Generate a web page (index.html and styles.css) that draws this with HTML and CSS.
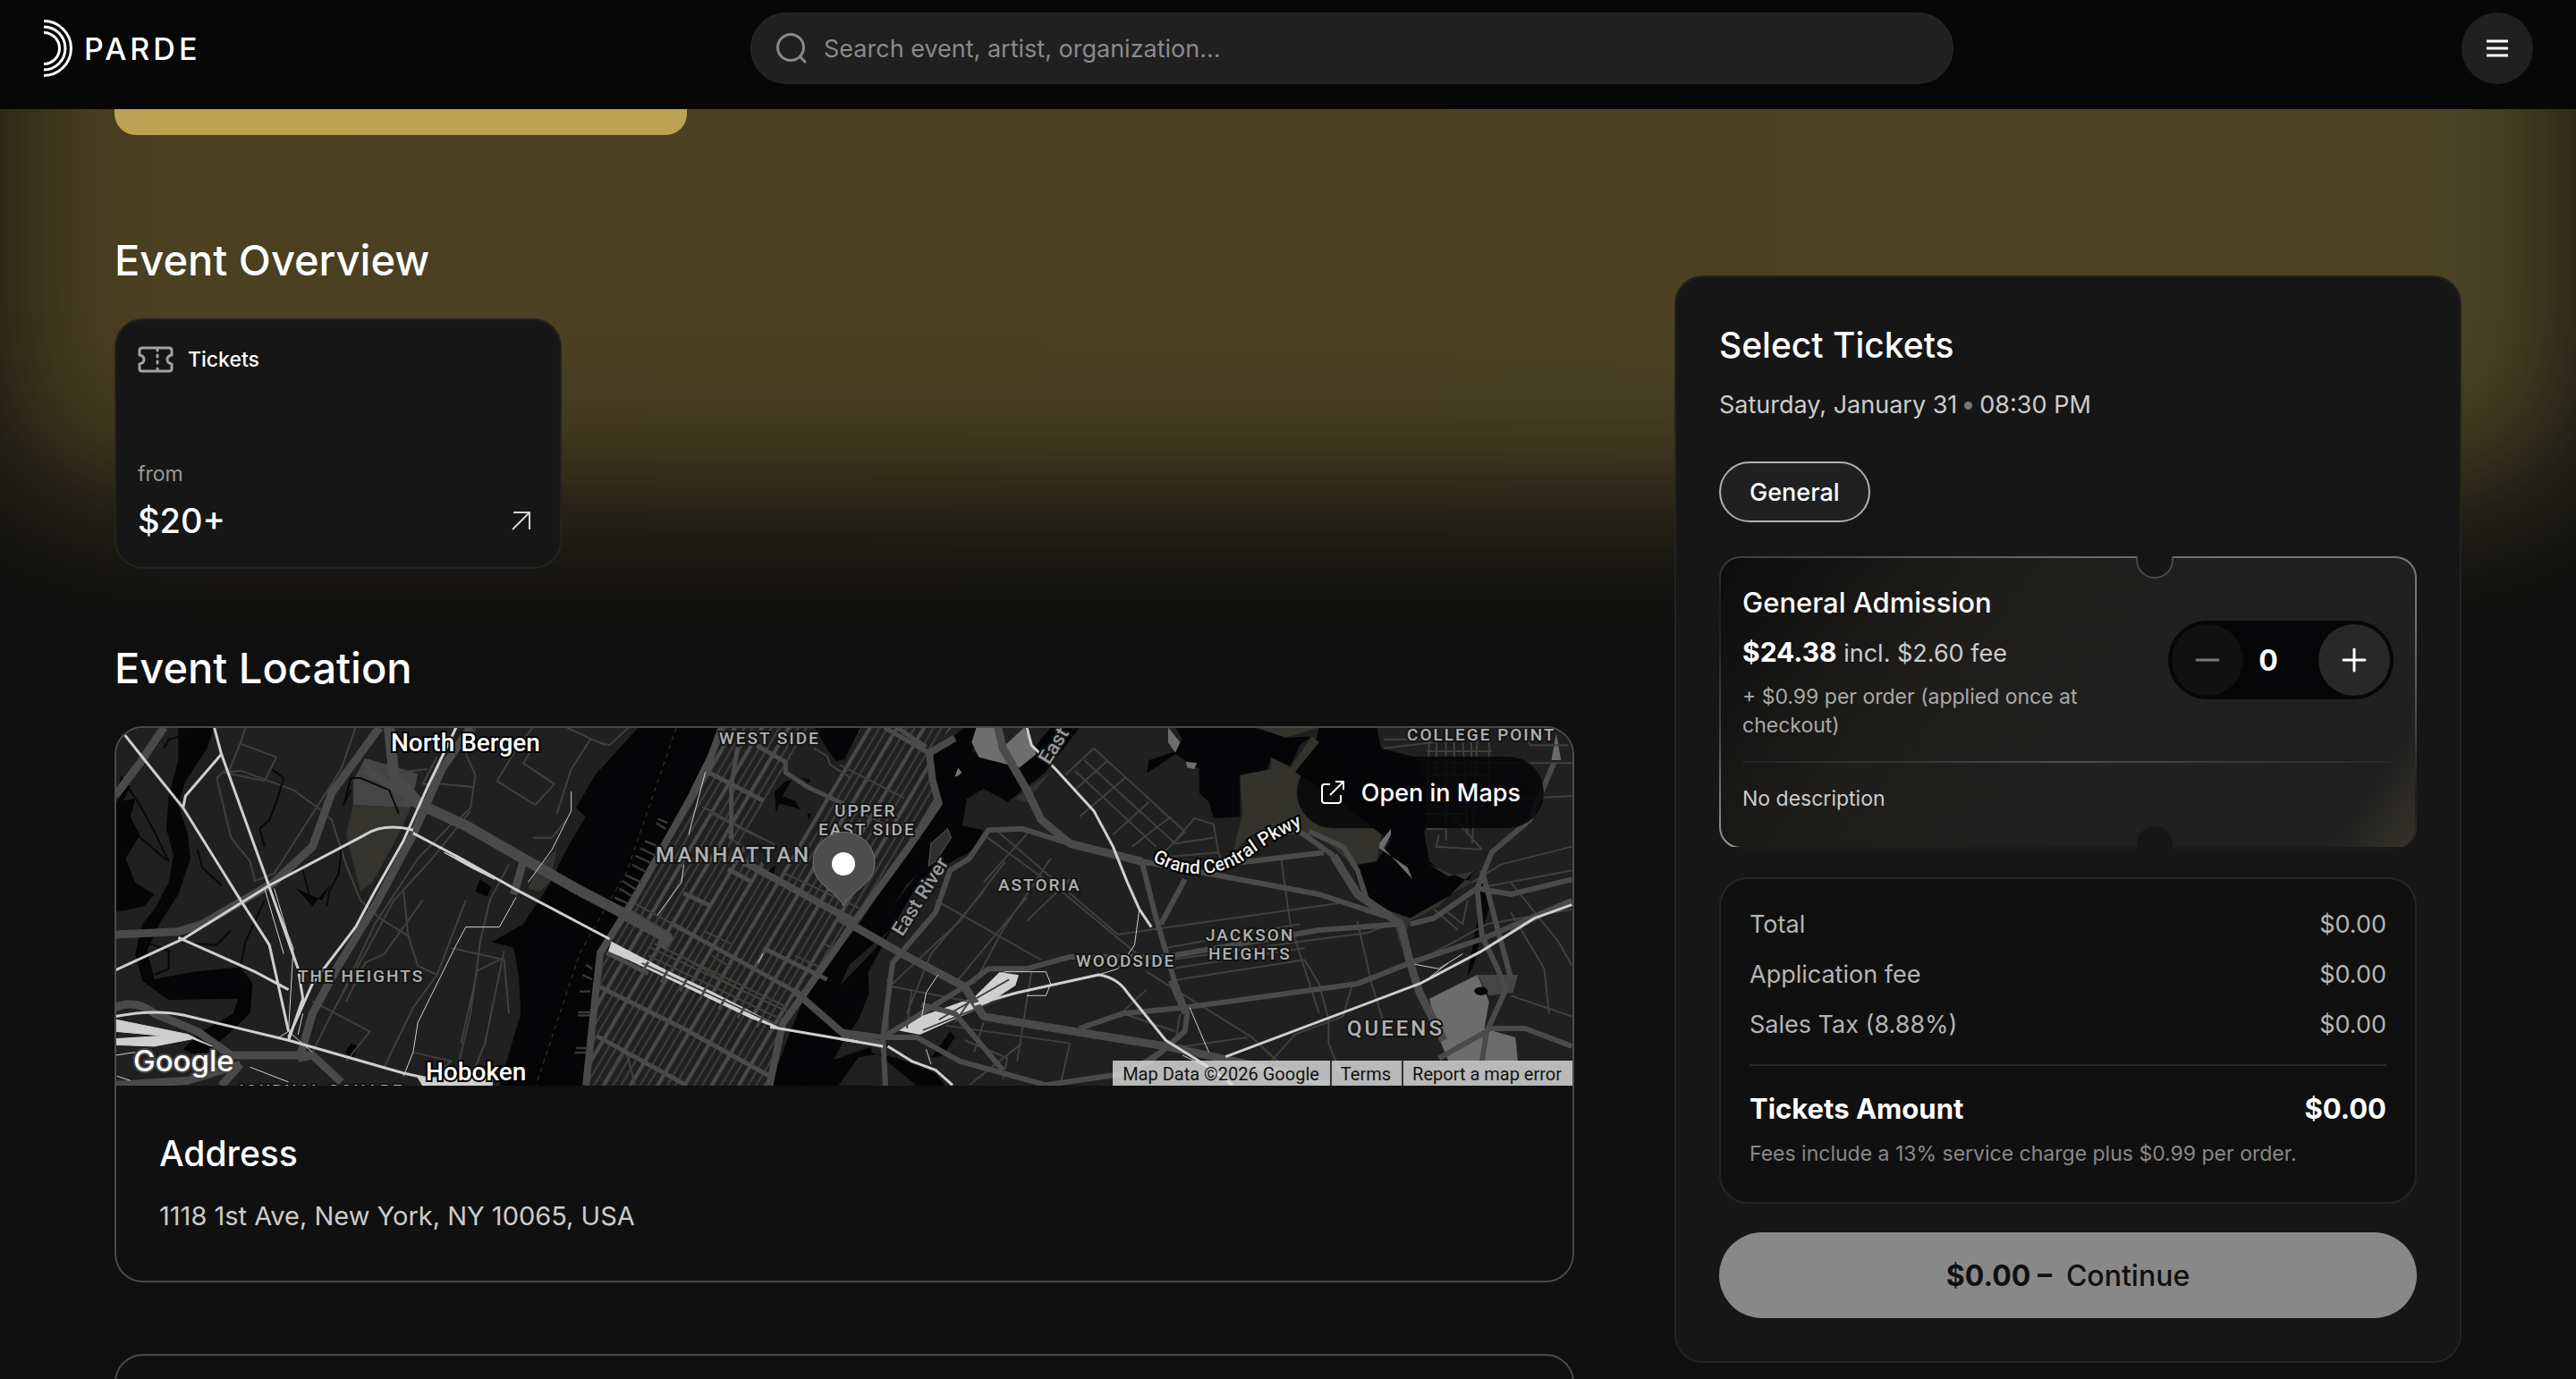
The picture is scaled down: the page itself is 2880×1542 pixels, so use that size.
FILE: index.html
```html
<!DOCTYPE html>
<html lang="en">
<head>
<meta charset="utf-8">
<title>PARDE – Event</title>
<link rel="stylesheet" href="styles.css">
</head>
<body>
<div class="page">
  <div class="glow"></div>
  <header class="header">
    <a class="logo" href="#">
      <svg class="logo-mark" width="34" height="66" viewBox="0 0 34 66" fill="none" stroke="#fff" stroke-width="3"><path d="M1 2.500A30.500 30.500 0 0 1 1 63.500"/><path d="M1 9A24 24 0 0 1 1 57"/><path d="M1 15.500A17.500 17.500 0 0 1 1 50.500"/></svg>
      <span>PARDE</span>
    </a>
    <label class="search">
      <svg width="36" height="36" viewBox="0 0 36 36" fill="none" stroke="#8a8a8a" stroke-width="3" stroke-linecap="round"><circle cx="17" cy="17" r="14.500"/><path d="M28 28l5 5"/></svg>
      <input type="text" placeholder="Search event, artist, organization..." aria-label="Search">
    </label>
    <button class="menu" aria-label="Menu"><svg width="24" height="20" viewBox="0 0 24 20" stroke="#fff" stroke-width="3"><path d="M0 2h24M0 10h24M0 18h24"/></svg></button>
  </header>
  <main class="main">
    <div class="left">
      <button class="cta" aria-label="Get tickets"></button>
      <section class="overview">
        <h2>Event Overview</h2>
        <a class="tickets-card" href="#">
          <span class="tickets-top">
            <svg width="40" height="30" viewBox="0 0 40 30" fill="none" stroke="#a2a2a2" stroke-width="3" stroke-linejoin="round" stroke-linecap="round"><path d="M5 2h30q3 0 3 3v5q-5 1-5 5t5 5v5q0 3-3 3H5q-3 0-3-3v-5q5-1 5-5t-5-5V5q0-3 3-3z"/><path d="M22 3v2M22 10v2M22 17v2M22 25v2"/></svg>
            <span>Tickets</span>
          </span>
          <span class="from">from</span>
          <span class="tickets-price"><b>$20+</b>
            <svg width="22" height="22" viewBox="0 0 22 22" fill="none" stroke="#d5d5d5" stroke-width="2"><path d="M1 21L20 2M2 2h18v19"/></svg></span>
        </a>
      </section>
      <section class="location">
        <h2>Event Location</h2>
        <div class="location-card">
          <div class="map">
            <svg class="map-art" viewBox="0 0 1630 400" preserveAspectRatio="xMidYMid slice">
              <defs>
                <pattern id="streets" width="74" height="400" patternUnits="userSpaceOnUse" patternTransform="rotate(29)"><path d="M6 0V400" stroke="#494949" stroke-width="12"/><path d="M32 0V400M54 0V400" stroke="#403f3b" stroke-width="6"/></pattern>
                <path id="parkway" d="M1159 148Q1210 178 1262 148Q1295 122 1335 106"/>
              </defs>
              <rect width="1630" height="400" fill="#202020"/>
              <g transform="translate(-10 -14) scale(.5357 .3333)">
                <g fill="#050507">
                  <path d="M1110 40H1285L1250 180 1205 300 1175 400 1110 600 1070 680 1030 830 1015 900 1000 1242H820L865 1000 860 870 850 780 805 760 870 700 920 580 960 450 1000 340 980 310 1020 200Z"/>
                  <path d="M150 40H225L210 110 165 220 150 300 170 400 175 480 150 600 110 700 85 790 100 885 180 860 280 845 305 900 300 1000 240 1090 200 1150 160 1120 200 1060 265 1000 275 950 130 955 75 890 60 800 75 700 100 650 130 560 140 470 125 380 130 270 150 150Z"/>
                  <path d="M18 290L60 280 50 340 70 400 40 480 60 560 100 600 80 640 18 660ZM30 200L50 240 20 330ZM395 580L430 640 470 560 450 620ZM780 550L803 575 795 608 770 590ZM510 1100L525 1110 515 1150 498 1130Z"/>
                  <path d="M1585 690L1530 780 1455 950 1425 1070 1385 1242H1600Z"/>
                </g>
                <path d="M540 143L650 195 635 310 515 300 515 220Z" fill="#454545"/>
                <path d="M515 300L635 310 600 430 555 560 530 590 500 400ZM940 450L925 560 905 590 880 580 900 510Z" fill="#34332e"/>
              </g>
              <g transform="translate(810 -14) scale(.5357 .3333)">
                <g fill="#050507">
                  <path d="M190 130L260 40H300L275 120 370 180 440 40H500L430 190 350 290 300 245 265 280 255 370 300 385 280 450 235 490 200 515 150 600 100 740 60 860 0 1060-50 1180-80 1242H-130L-60 880 0 780 45 690 130 470 180 380 210 290 195 170Z"/>
                  <path d="M700 40H860L940 75 985 70 960 100 940 170 900 140 890 190 835 200 835 340 780 345 770 290 750 260 750 180 700 130 640 195 645 150 700 120 715 80Z"/>
                  <path d="M1000 40H1120L1130 110 1200 140 1225 220 1220 400 1230 490 1270 540 1325 520 1300 580 1230 650 1190 680 1120 640 1080 560 1070 505 1120 490 1150 420 1100 370 1000 240 950 190 990 110Z"/>
                  <path d="M0 1160L60 1130 120 1150 200 1200 220 1242 150 1242 60 1150 0 1200ZM230 1060L240 1080 215 1140 190 1150ZM1340 540L1360 620 1345 700 1320 850 1310 870 1330 690Z"/>
                </g>
                <path d="M225 380L232 410 200 490 185 505 190 430Z" fill="#303030" stroke="#555" stroke-width="2"/>
                <path d="M285 40H335L345 100 385 40 410 130 375 175 290 140 275 90ZM685 40L710 90 700 125 685 90ZM722 155L745 160 740 180 725 175ZM1120 440L1150 380 1150 400 1135 445 1195 550 1185 510 1130 450Z" fill="#6e6e6e"/>
                <path d="M835 200L900 180 900 140 940 175 985 70 1000 90 950 190 1060 310 1130 400 1120 490 1070 500 1000 400 860 400 820 460 840 330ZM440 190L390 290 365 280ZM870 40H1000L930 75ZM1230 500L1270 540 1325 520 1250 640 1190 690 1170 780 1150 660 1120 640 1190 680 1320 560Z" fill="#33322c"/>
                <path d="M1230 950L1330 870 1355 960 1345 1050 1410 1080 1415 1160H1270L1250 1080ZM1495 60L1505 150 1485 150Z" fill="#6b6c6b"/>
                <path d="M1330 870H1415L1405 930 1355 940Z" fill="#454545"/>
                <circle cx="1338" cy="925" r="14" fill="#050507"/>
              </g>
              <g transform="translate(510 -2) scale(.3571 .3333)">
                <path d="M470 5H1190L1120 90 1150 260 1060 400 890 650 660 1000 620 1205H45L75 900 90 760 190 590 300 380 420 150Z" fill="url(#streets)"/>
                <path d="M740 5L690 100 530 390 650 510 740 340 905 5Z" fill="#202020"/>
                <path d="M760 5H905L855 110 830 118 805 85ZM670 185L690 180 660 235 700 250 715 280 690 270 650 260 640 290 636 220ZM720 172L748 180 740 190ZM738 295L752 290 742 315ZM610 490L640 465 630 510Z" fill="#050507"/>
                <path d="M470 5L435 150 350 290 370 220 430 90Z" fill="#5a5a5a"/>
                <path d="M870 800L1000 680 940 760 840 870ZM980 650L1050 530 1080 500 1010 600ZM820 1120L850 1060 900 980 930 900 990 860 980 1060ZM835 1205L900 1110 960 1100 1080 1205Z" fill="#202020"/>
                <g class="road minor">
                  <path d="M410 270L640 400M430 290L600 380M490 370L530 400M840 130L1040 240M850 260L1000 340M660 490L900 610M650 520L880 640M700 540L890 670M190 590L310 660M180 615L300 690M240 740L680 960M260 730L670 940M240 770L660 985M340 770L520 880M980 10L1110 90M690 540L800 600M420 690L500 730M440 770L500 810M700 770L780 810M790 730L830 750M120 1160L170 1090 200 1205M760 75L800 100 810 130 870 170"/>
                </g>
                <g class="road major streets">
                  <path d="M420 150L600 250M580 65L670 120 670 155 740 205 850 260M350 560L430 600M490 480L560 520M310 660L700 890M110 760L240 830M80 870L360 1020 630 1180M80 1040L360 1205M600 745L800 850M520 70L500 200 500 380M1020 5L1110 70M980 5L1120 90"/>
                  <path class="avenue" d="M540 455L890 660M470 5L420 150 300 380 190 590 90 760 75 900 45 1205M1200 40L1120 90 1130 180 1150 260 1060 400 890 650 740 880 660 1000 620 1205M700 890L860 1040 980 1070"/>
                  <path class="wide" d="M160 630L300 710 280 740"/>
                </g>
                <path d="M1050 990L1260 910 1340 825 1400 835 1390 870 1290 940 1090 1035 1020 1020ZM125 722L165 745 300 820 430 885 640 1000 660 1020 560 980 180 785 115 755Z" fill="#cfcfd0"/>
                <path d="M220 795L660 1012M1100 1020L1400 890M1150 985L1370 850" stroke="#3a3a3a" stroke-width="5" fill="none"/>
                <path d="M240 790L220 830M300 820L280 860M360 850L340 890M420 880L400 920M480 915L460 950M540 945L520 980M600 975L580 1010" stroke="#474747" stroke-width="8"/>
                <path d="M270 310L300 325M265 325L295 345M230 385L285 410M215 410L265 435M200 435L250 460M190 465L235 490M170 500L220 525M160 520L205 550M150 545L190 570M135 575L175 595M45 800L65 815M35 835L65 850M25 890H60M20 960H60M20 970H58M15 1080H50M10 1095H48" stroke="#3a3a3a" stroke-width="7"/>
                <path d="M1210 140L1222 155 1212 165 1200 170Z" fill="#777"/>
              </g>
              <g class="road minor" transform="translate(-10 -14) scale(.5357 .3333)">
                <path d="M290 40L280 90 255 190 280 185 390 250 450 320 470 350 500 500 530 620 570 680 630 740M355 140L280 95M355 140L330 220M520 40L490 180 350 530 310 555 300 490 260 410 230 210 250 180M690 140L660 230 700 230 765 240M750 130L770 200 760 310 735 350M770 40L750 130M810 70L890 110 870 160 935 230 895 300 815 220 860 100 890 40M1090 40L1050 100 1010 80 970 180 940 330M890 410L930 410 960 350M960 40L1040 100"/>
                <path d="M760 320L710 420 680 480 600 620 560 740 470 1000 430 1130M735 340L650 480 560 700 490 940M620 590L630 740 650 840 690 870M660 620L580 800 540 830 500 960M750 620L690 870 640 980 580 1180M840 500L800 620 780 760 760 1000 730 1200M720 780L830 820 840 1000M830 790L790 1100 770 1180M775 850L740 1100M820 820L770 860M430 960L550 1060 500 1160M640 1130L720 1160 690 1200M330 220L240 190M670 180L620 190 560 230"/>
              </g>
              <g class="road creek" transform="translate(-10 -14) scale(.5357 .3333)">
                <path d="M40 230L70 300 100 390 130 490M50 380L125 485M120 110L130 80 180 60M345 180L370 210 355 290 340 350 320 380 330 440M510 210L495 300 510 250M510 210L530 210 590 250 610 330M490 450L485 530 465 590 460 640M190 450L200 510 240 570M410 520L430 640M260 720L230 770 180 765M330 620L290 760 280 840M80 760L130 790 130 850 100 870"/>
              </g>
              <g class="road minor" transform="translate(810 -14) scale(.5357 .3333)">
                <path d="M530 110L720 390 650 500M530 110L470 200M510 150L700 430M490 185L660 440M595 210L500 340M645 290L570 400M690 340L610 440M560 150L490 250M695 430L740 345 780 365 790 460 800 500M700 430L780 410M680 475L790 460"/>
                <path d="M330 390L580 735M300 400L470 600 620 800M345 490L250 690 110 900M390 610L240 900M440 480L340 720 280 900M200 620L420 820M480 550L390 690M400 380L300 560M300 590L190 800 140 1000M580 735L1040 630M920 470L940 700 1000 1000M680 780L960 700M690 850L970 780M690 890L970 820M1150 700L1100 730 1000 750 690 820M1080 690L1110 900 1140 1060M970 820L1000 900 1020 1020 1020 1100 1050 1220M1070 900L1050 1010 950 1070 900 1160M640 860L710 930 860 1080 920 1170M500 1060L720 1110 850 1080M110 910L270 960 240 1030M100 880L100 1060M150 920L140 1050M400 860L370 1160M480 1100L460 1240M710 1000L700 1100M300 1030L280 1130M220 1040L480 1100M380 1100L270 1240M260 1090L350 1150 340 1220M590 1000L700 1060M640 920L580 1010"/>
                <path d="M1230 80L1225 300M1265 80V420M1300 80L1310 400M1330 80L1320 430M1355 80V280M1225 120H1360M1225 160H1528M1225 200H1350M1220 330H1310M1225 380H1260M1250 400L1245 440 1340 450M1340 450L1280 340M1135 80H1230M1135 110L1240 90M1430 40L1440 100H1520M1528 270L1420 280M1528 440L1380 500 1320 560M1528 520L1330 580M1528 650L1350 700 1200 830M1460 680L1400 720M1400 560L1500 760 1528 840M1400 940L1528 1010M1400 660L1470 850 1480 1000M1260 650L1300 700 1310 620M1240 650L1290 720M1245 80V200M1282 80V200M1318 80V200"/>
              </g>
              <g class="road major" transform="translate(-10 -14) scale(.5357 .3333)">
                <path d="M120 40L70 160 18 270M570 40L470 260 430 440 350 560 200 700 150 725 18 735M760 40L700 180 640 400 560 640 480 850 430 1000 405 1140"/>
                <path class="wide" d="M590 40L600 200 650 290M630 280L750 370 880 490 990 590 1110 690"/>
                <path d="M540 180L600 240 660 300M870 490L850 600M18 980Q60 950 100 1000L190 1060 260 1140 430 1140 490 1230M280 1170L240 1242M280 1170L170 1225 18 1240M430 1140L400 1150"/>
              </g>
              <g class="road major" transform="translate(810 -14) scale(.5357 .3333)">
                <path d="M330 40L340 110 390 250 420 350 480 430 630 490M1030 470L1080 600 1170 700 1190 830 1210 930 1260 1090"/>
                <path d="M0 680L130 800 260 910 300 1010 450 1050 680 1110 880 1180 1020 1240"/>
                <path class="mid" d="M630 490L800 540 1000 600 1170 690M960 390L1030 470M980 390L1050 440 1080 520 1100 620 1150 670M480 430L380 380 310 385 270 480 230 520 200 660 110 830 90 1080M630 490L660 680 700 900 725 1000 720 1060 670 1130 640 1170M720 550L670 700M800 500L1010 460M260 910L310 850 390 850 480 810 680 810 1000 720 1170 700M260 910L90 1080M690 890L720 1000M500 1050L590 1000 720 980 1080 900 1190 830 1340 750 1528 620M1190 700L1240 680 1330 580 1400 600 1528 550M1490 160L1440 350 1360 460 1330 580 1340 740 1370 840 1390 920 1350 1060 1250 1150M1340 520L1400 880M1350 1050L1430 1050 1528 1110M1350 1060L1340 1160M90 1080L160 1080 250 1160 430 1240 600 1200 670 1130M90 1080L95 1242M0 1060L90 1080M170 970L240 1000 340 1190"/>
              </g>
              <g class="road rail" transform="translate(-10 -14) scale(.5357 .3333)">
                <path class="main-rail" d="M38 65L80 150 160 310 280 620 340 770 380 1060M225 40L240 130 165 270 160 310M240 130L330 530 400 850 410 950 380 1090M18 855L160 750 340 570 540 400Q580 360 640 385M730 40L670 240 620 420 560 590 520 710 430 900 380 1080M640 395L740 480 850 580 1050 750M150 745L310 860 380 920M18 1010Q100 985 160 1005L380 1090 620 1200 740 1242M1385 1045L1568 1095"/>
                <path d="M855 610L820 710 750 710 730 770 690 900 650 1030 640 1130 620 1210M970 255L970 320 930 450 880 560M340 580L390 780 380 1060M350 580L400 850M330 580L370 800M300 1180L380 1230M1250 190L1215 400M1205 500L1200 560 1150 670M360 1080L380 1060 430 1130M410 1000L400 1070M1370 800L1360 830M60 1130L20 1140M22 1210L50 1225"/>
                <path d="M18 1020L170 1070 220 1110 180 1085 100 1110 18 1105V1085L120 1075 18 1060ZM650 1215H805V1242H660ZM705 460L760 500 810 550 760 510Z" class="yard"/>
              </g>
              <g class="road rail" transform="translate(810 -14) scale(.5357 .3333)">
                <path class="main-rail" d="M390 40L400 100 450 180 530 320 570 440 600 560 625 650 650 710M0 1085L90 1110M280 970L370 930 540 870Q580 880 600 930L680 1090 760 1170 820 1240M100 1110L150 1160 200 1190 235 1240M805 1145L1210 900 1340 790 1450 680 1528 635"/>
                <path d="M625 650L615 770 580 850 540 870M730 980L770 1130M330 870L345 860H430L440 900 430 940H390M205 870L180 930 170 1020M180 1120L190 1170M1200 835L1250 850 1300 800M1230 880L1270 830M715 1140L780 1190"/>
              </g>
              <path d="M627 0L572 160 520 250 470 400" stroke="#3c3c3c" stroke-width="1" stroke-dasharray="5 5" fill="none"/>
              <g class="label place">
                <text x="308" y="26">North Bergen</text>
                <text x="347" y="394">Hoboken</text>
              </g>
              <g class="label area">
                <text x="675" y="18">WEST SIDE</text><text x="804" y="99">UPPER</text><text x="786" y="120">EAST SIDE</text>
                <text x="204" y="284">THE HEIGHTS</text><text x="133" y="412">JOURNAL SQUARE</text><text x="987" y="182">ASTORIA</text><text x="1074" y="267">WOODSIDE</text><text x="1219" y="238">JACKSON</text><text x="1222" y="259">HEIGHTS</text><text x="1444" y="14">COLLEGE POINT</text>
              </g>
              <g class="label city"><text x="604" y="150">MANHATTAN</text><text x="1377" y="344">QUEENS</text></g>
              <g class="label river"><text transform="translate(880 234) rotate(-58)">East River</text><text transform="translate(1044 42) rotate(-58)">East River</text></g>
              <text class="label parkway"><textPath href="#parkway">Grand Central Pkwy</textPath></text>
              <text class="label google" x="20" y="384">Google</text>
              <path d="M814 199C807 182 780 176 780 151a34 34 0 0 1 69 0C849 176 821 182 814 199Z" fill="#4d4d4d" stroke="#777" stroke-width="1"/>
              <circle cx="814" cy="152" r="13" fill="#fff"/>
            </svg>
            <button class="open-maps"><svg width="28" height="28" viewBox="0 0 28 28" fill="none" stroke="#fff" stroke-width="2"><path d="M11 5H5Q2 5 2 8V23Q2 26 5 26H20Q23 26 23 23V17M11 17L26 2M17 2h9v9"/></svg>Open in Maps</button>
            <div class="attribution"><span>Map Data ©2026 Google</span><a href="#">Terms</a><a href="#">Report a map error</a></div>
          </div>
          <div class="address"><h3>Address</h3><p>1118 1st Ave, New York, NY 10065, USA</p></div>
        </div>
      </section>
      <section class="next-card"></section>
    </div>
    <aside class="panel">
      <h3>Select Tickets</h3>
      <p class="date">Saturday, January 31<i class="dot"></i>08:30 PM</p>
      <button class="pill">General</button>
      <article class="ticket">
        <svg class="notch notch-top" width="44" height="26" viewBox="0 0 44 26"><path d="M2 0V4a20 20 0 0 0 40 0V0z" fill="#161616"/><path d="M2 0V4a20 20 0 0 0 40 0V0" fill="none" stroke="#4c4b48" stroke-width="2"/></svg>
        <svg class="notch notch-bottom" width="44" height="26" viewBox="0 0 44 26"><path d="M2 26V21a20 20 0 0 1 40 0V26z" fill="#161616"/></svg>
        <div class="ticket-main">
          <div class="ticket-info">
            <h4>General Admission</h4>
            <p class="price"><b>$24.38</b> <span>incl. $2.60 fee</span></p>
            <p class="order-fee">+ $0.99 per order (applied once at checkout)</p>
          </div>
          <div class="stepper">
            <button class="minus" aria-label="Remove one"><svg width="28" height="28" viewBox="0 0 28 28" stroke="#777" stroke-width="3" stroke-linecap="round"><path d="M2 14h24"/></svg></button>
            <input type="text" value="0" aria-label="Quantity">
            <button class="plus" aria-label="Add one"><svg width="28" height="28" viewBox="0 0 28 28" stroke="#fff" stroke-width="3" stroke-linecap="round"><path d="M2 14h24M14 2v24"/></svg></button>
          </div>
        </div>
        <div class="rule"></div>
        <p class="description">No description</p>
      </article>
      <div class="summary">
        <dl>
          <div><dt>Total</dt><dd>$0.00</dd></div>
          <div><dt>Application fee</dt><dd>$0.00</dd></div>
          <div><dt>Sales Tax (8.88%)</dt><dd>$0.00</dd></div>
          <div class="amount"><dt>Tickets Amount</dt><dd>$0.00</dd></div>
        </dl>
        <p>Fees include a 13% service charge plus $0.99 per order.</p>
      </div>
      <button class="continue"><b>$0.00 –</b>Continue</button>
    </aside>
  </main>
</div>
</body>
</html>
```
FILE: styles.css
```css
* { box-sizing: border-box; margin: 0; padding: 0; }
body { background: #101010; color: #fff; font-family: Inter, "Noto Sans", sans-serif; }
button, input { font: inherit; color: inherit; border: 0; background: none; }
a { color: inherit; text-decoration: none; }
.page { position: relative; height: 100vh; overflow: hidden; }
.glow { position: absolute; inset: -200px 0 auto; height: 750px; border-radius: 120px; background: linear-gradient(90deg, #4b4020, #4b4122 50%, #4d4525); filter: blur(80px); }
.header { position: relative; z-index: 2; height: 122px; padding: 14px 48px 28px; display: grid; grid-template-columns: 791fr 1345px 648fr; background: #070708; }
.logo { display: flex; align-items: center; gap: 12px; font-size: 34px; font-weight: 500; letter-spacing: 4px; }
.search { display: flex; align-items: center; gap: 18px; height: 80px; padding: 0 26px; border-radius: 40px; background: #202020; border: 2px solid #262523; }
.search input { flex: 1; font-size: 27px; outline: 0; }
.search input::placeholder { color: #8a8a8a; opacity: 1; }
.menu { justify-self: end; width: 80px; height: 80px; border-radius: 50%; background: #202020; display: grid; place-items: center; }
.main { position: relative; display: grid; grid-template-columns: minmax(0, 1632fr) minmax(0, 880fr); gap: 112px; padding: 0 128px; align-items: start; }
.cta { display: block; width: 640px; height: 29px; border-radius: 0 0 24px 24px; background: #bba353; }
h2 { font-size: 47px; line-height: 60px; font-weight: 500; }
h3 { font-size: 39px; line-height: 48px; font-weight: 500; }
.overview { margin-top: 110px; }
.tickets-card { display: flex; flex-direction: column; width: 500px; height: 280px; margin-top: 35px; padding: 24px; border: 2px solid #222221; border-radius: 32px; background: #161616; font-size: 23px; line-height: 40px; }
.tickets-top { display: flex; align-items: center; gap: 16px; font-weight: 500; }
.from { margin-top: auto; color: #999; line-height: 32px; }
.tickets-price { display: flex; align-items: center; justify-content: space-between; padding-right: 8px; margin-top: 8px; line-height: 56px; }
.tickets-price b { font-size: 38px; font-weight: 500; }
.location { margin-top: 81px; }
.location-card { margin-top: 35px; border: 2px solid #4a4a49; border-radius: 32px; overflow: hidden; background: #101010; }
.map { position: relative; height: 400px; }
.map-art { display: block; width: 100%; height: 400px; }
.road { fill: none; stroke-linejoin: round; }
.road path { vector-effect: non-scaling-stroke; }
.minor { stroke: #41403c; stroke-width: 2px; }
.creek { stroke: #08080a; stroke-width: 2px; }
.major { stroke: #4a4a4a; stroke-width: 9px; }
.streets { stroke-width: 5px; }
.streets .avenue { stroke-width: 8px; }
.major .mid { stroke-width: 6px; }
.major .wide { stroke-width: 12px; }
.rail { stroke: #cfcfd0; stroke-width: 1px; }
.rail .main-rail { stroke-width: 3px; }
.rail .yard { fill: #cfcfd0; }
.label { font-family: Roboto, sans-serif; fill: #b0b0b0; stroke: #151515; stroke-width: 4px; paint-order: stroke; font-weight: 500; }
.place { font-size: 28px; fill: #fff; stroke: #000; }
.area { font-size: 19px; letter-spacing: 2px; }
.city { font-size: 24px; letter-spacing: 3px; }
.river { font-size: 22px; fill: #999; }
.parkway { font-size: 21px; fill: #eee; stroke: #000; }
.google { font-family: Inter, sans-serif; font-size: 33px; fill: #fff; stroke: #444; }
.open-maps { position: absolute; top: 32px; right: 32px; display: flex; align-items: center; gap: 18px; height: 80px; padding: 0 26px; border-radius: 40px; background: rgba(6, 6, 8, .86); font-size: 27px; font-weight: 500; }
.attribution { position: absolute; right: 0; bottom: 0; display: flex; height: 28px; font: 20px/30px Roboto, sans-serif; color: #111; }
.attribution > * { background: rgba(220, 220, 220, .82); padding: 0 12px 0 11px; }
.attribution > * + * { border-left: 2px solid #333; padding-left: 10px; }
.address { padding: 52px 48px 40px; }
.address p { margin-top: 22px; font-size: 29px; line-height: 48px; color: #ccc; padding-bottom: 8px; }
.next-card { margin-top: 80px; height: 320px; border: 2px solid #4a4a49; border-radius: 32px; }
.panel { margin-top: 186px; padding: 48px; border: 2px solid #232322; border-radius: 32px; background: #161616; }
.panel h3 { margin-top: 4px; }
.date { display: flex; align-items: center; margin-top: 23px; font-size: 27px; line-height: 40px; color: #ccc; }
.dot { width: 9px; height: 9px; margin: 0 8px; border-radius: 50%; background: #777; }
.pill { display: block; height: 68px; margin-top: 43px; padding: 0 32px; border: 2px solid #b0b0b0; border-radius: 34px; background: #202020; font-size: 27px; font-weight: 500; }
.ticket { position: relative; margin-top: 38px; height: 327px; padding: 26px 24px; border: 2px solid transparent; border-radius: 24px; background: linear-gradient(125deg, #0d0d0e, #1e1d1a 30%, #202020 60%, #202020 90%, #35322a) padding-box, linear-gradient(0deg, #1b1b1a 2px, transparent 2px) border-box, linear-gradient(15deg, #999, #444 25%, #1b1b1a 50%, #555 70%, #777 90%) border-box; }
.notch { position: absolute; left: 463px; }
.notch-top { top: -2px; }
.notch-bottom { bottom: -2px; }
.ticket-main { display: flex; justify-content: space-between; }
.ticket-info { width: 400px; }
h4 { font-size: 31px; line-height: 48px; font-weight: 500; }
.price { margin-top: 9px; line-height: 44px; font-size: 27px; color: #ccc; }
.price b { font-size: 30px; font-weight: 700; color: #fff; }
.order-fee { margin-top: 10px; font-size: 23px; line-height: 32px; color: #aaa; }
.stepper { display: flex; align-items: center; width: 252px; height: 88px; margin-top: 44px; padding: 4px; border-radius: 44px; background: #060608; }
.stepper button { flex: none; width: 80px; height: 80px; border-radius: 50%; display: grid; place-items: center; }
.minus { background: #111; }
.plus { background: #282828; }
.stepper input { min-width: 0; flex: 1; padding-right: 28px; text-align: center; font-size: 32px; font-weight: 700; }
.rule { height: 2px; margin-top: 24px; background: linear-gradient(90deg, #222, #4c4c4c 50%, #2a2925); }
.description { margin-top: 22px; font-size: 23px; line-height: 36px; color: #ccc; }
.summary { margin-top: 32px; padding: 23px 32px 32px; border: 2px solid #272623; border-radius: 32px; background: #101010; }
.summary dl div { display: flex; justify-content: space-between; font-size: 27px; line-height: 56px; color: #b5b5b5; }
.summary dl .amount { margin-top: 16px; padding-top: 20px; border-top: 2px solid #2b2a27; font-size: 31px; font-weight: 700; color: #fff; }
.summary p { font-size: 23px; line-height: 44px; color: #888; }
.continue { display: flex; align-items: center; justify-content: center; gap: 16px; width: 100%; height: 96px; margin-top: 32px; border-radius: 48px; background: #888; color: #101010; font-size: 32px; font-weight: 500; }
```
